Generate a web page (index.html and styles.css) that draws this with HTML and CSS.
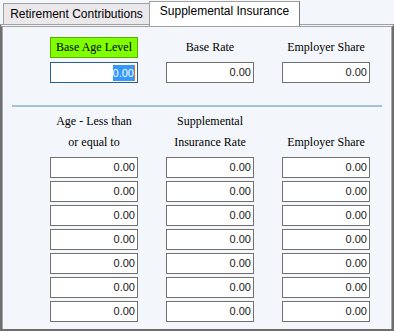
FILE: index.html
```html
<!DOCTYPE html>
<html>
<head>
<meta charset="utf-8">
<link rel="stylesheet" href="styles.css">
</head>
<body>
<div class="tabs">
  <div class="tab">Retirement Contributions</div>
  <div class="tab active">Supplemental Insurance</div>
</div>
<div class="panel">
  <div class="grid top">
    <div class="label highlight">Base Age Level</div>
    <div class="label">Base Rate</div>
    <div class="label">Employer Share</div>
    <div class="field focused"><span class="sel">0.00</span><span class="caret"></span></div>
    <div class="field">0.00</div>
    <div class="field">0.00</div>
  </div>
  <div class="sep"></div>
  <div class="grid bottom">
    <div class="label head">Age - Less than<br>or equal to</div>
    <div class="label head">Supplemental<br>Insurance Rate</div>
    <div class="label head">Employer Share</div>
    <div class="field">0.00</div><div class="field">0.00</div><div class="field">0.00</div>
    <div class="field">0.00</div><div class="field">0.00</div><div class="field">0.00</div>
    <div class="field">0.00</div><div class="field">0.00</div><div class="field">0.00</div>
    <div class="field">0.00</div><div class="field">0.00</div><div class="field">0.00</div>
    <div class="field">0.00</div><div class="field">0.00</div><div class="field">0.00</div>
    <div class="field">0.00</div><div class="field">0.00</div><div class="field">0.00</div>
    <div class="field">0.00</div><div class="field">0.00</div><div class="field">0.00</div>
  </div>
</div>
</body>
</html>
```
FILE: styles.css
```css
html, body {
  margin: 0;
  height: 100%;
}
body {
  background: #f3f7fb;
  display: flex;
  flex-direction: column;
  overflow: hidden;
}
.tabs {
  display: flex;
  align-items: flex-end;
  height: 24px;
  padding-left: 3px;
  flex: none;
}
.tab {
  font: 12px "Liberation Sans", Arial, sans-serif;
  color: #000;
  box-sizing: border-box;
  height: 21px;
  line-height: 20px;
  background: #ebe8ec;
  border: 1px solid #a0a0a0;
  border-bottom: none;
  width: 147px;
  text-align: center;
  white-space: nowrap;
}
.tab.active {
  position: relative;
  z-index: 1;
  background: #fff;
  height: 25px;
  width: 151px;
  margin-left: -1px;
  margin-bottom: -2px;
  line-height: 19px;
  border-right-color: #7a7a7a;
}
.panel {
  flex: 1;
  border-top: 3px double #a0a0a0;
  border-left: 2px solid #6e6e6e;
  border-right: 2px solid #6e6e6e;
  border-bottom: 2px solid #6e6e6e;
  box-shadow: inset 1px 0 0 #a8a8a8, inset -1px 0 0 #a8a8a8;
  background: #f3f7fb;
  padding-top: 10px;
}
.grid {
  display: grid;
  grid-template-columns: repeat(3, 88px);
  column-gap: 28px;
  margin-left: 48px;
}
.top {
  grid-template-rows: 21px 21px;
  row-gap: 4px;
}
.bottom {
  grid-auto-rows: 21px;
  grid-template-rows: 41px;
  row-gap: 3px;
  margin-top: 6px;
}
.bottom .head {
  margin-bottom: 1px;
  align-self: end;
}
.label {
  font: 12px "Liberation Serif", "Times New Roman", serif;
  color: #000;
  text-align: center;
  line-height: 21px;
  white-space: nowrap;
}
.highlight {
  box-sizing: border-box;
  background: #80ff00;
  border: 1px solid #56b000;
  line-height: 19px;
}
.field {
  box-sizing: border-box;
  height: 21px;
  background: #fff;
  border: 1px solid #707070;
  font: 11px "Liberation Sans", Arial, sans-serif;
  color: #1a1a1a;
  text-align: right;
  line-height: 19px;
  padding-right: 2px;
}
.field.focused {
  border-color: #2a5e8e;
  display: flex;
  justify-content: flex-end;
  align-items: center;
  padding-right: 2px;
}
.sel {
  background: #3399ff;
  color: #fff;
  line-height: 16px;
  height: 16px;
}
.caret {
  width: 1px;
  height: 16px;
  background: #e07020;
}
.sep {
  height: 2px;
  background: #a4c2d4;
  margin: 22px 10px 0 10px;
}
```
